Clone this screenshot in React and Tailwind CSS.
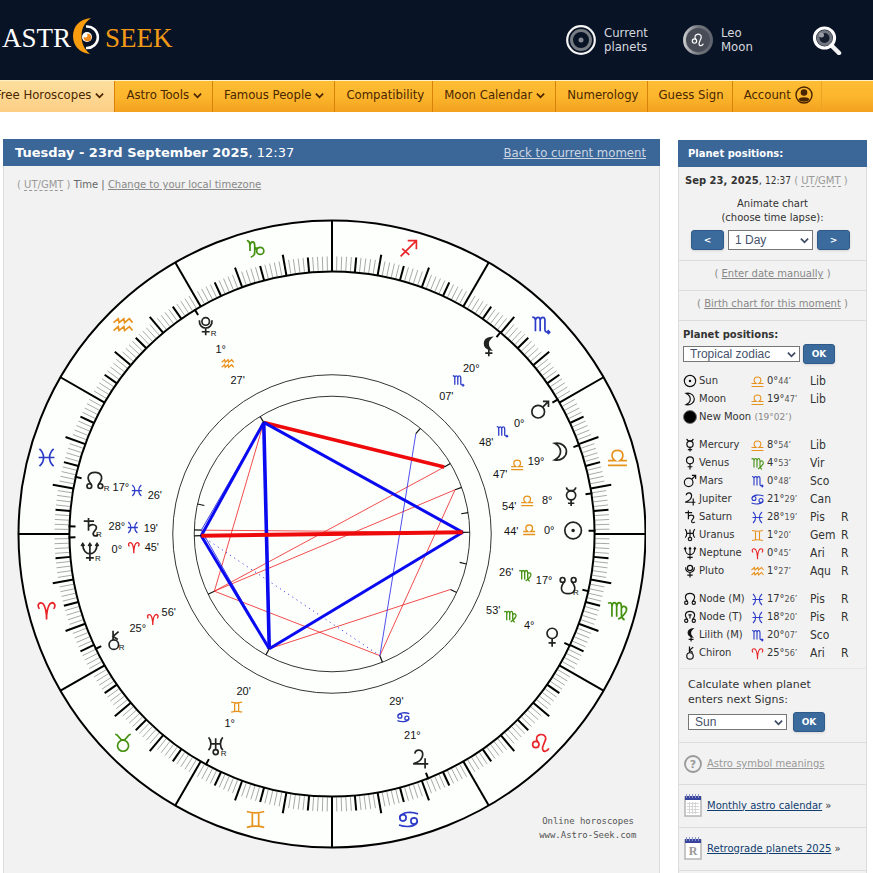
import React from 'react';
import clsx from 'clsx';

const UI = "font-['DejaVu_Sans_Condensed','Noto_Sans',sans-serif]";

// Stroke drawings of the symbols, all in a 24x24 box
const GLYPHS = {
  sun: <><circle cx="12" cy="12" r="10.5" /><circle cx="12" cy="12" r="1.2" fill="currentColor" /></>,
  moon: <path d="M5 1.5C14 0 20 6 20 12S14 24 5 22.5C10 20 12.500 16 12.500 12S10 4 5 1.500Z" />,
  mercury: <><circle cx="12" cy="10.5" r="5.8" /><path d="M6 0.500C7 6 17 6 18 0.500M12 16.500V24M8 20.500H16" /></>,
  venus: <><circle cx="12" cy="7" r="6.5" /><path d="M12 13.500V24M7.500 19H16.500" /></>,
  mars: <><circle cx="9.5" cy="14.5" r="8" /><path d="M15.300 8.700L22.500 1.500M15.500 1.500H22.500V8.500" /></>,
  jupiter: <path d="M5 5C6 -1 15 -1 15 6C15 12 9 16 3 18H22M18 11V24" />,
  saturn: <path d="M3 4H16M9 0V16M9 11C12 7 19 8 19 12C19 16 14 17 15 21C16 23.500 19 23 21 21" />,
  uranus: <><path d="M12 2V16M5 9H19M3 1C7 5 7 13 3 17M21 1C17 5 17 13 21 17" /><circle cx="12" cy="19.500" r="3.200" /></>,
  neptune: <path d="M3 3C3 19 21 19 21 3M12 2V24M7 20H17M1 5L3 2L5 5M19 5L21 2L23 5M10 5L12 2L14 5" />,
  pluto: <><circle cx="12" cy="6.500" r="4.800" /><path d="M4 5C3 18 21 18 20 5M12 15V24M7 19.500H17" /></>,
  node: <><circle cx="5" cy="19" r="3" /><circle cx="19" cy="19" r="3" /><path d="M7.500 17C0 8 4 1.500 12 1.500S24 8 16.500 17" /></>,
  nodeTrue: <><circle cx="5" cy="19" r="3" /><circle cx="19" cy="19" r="3" /><path d="M7.500 17C0 8 4 1.500 12 1.500S24 8 16.500 17M9 8H15M12 8V15" /></>,
  southNode: <><circle cx="5" cy="5" r="3" /><circle cx="19" cy="5" r="3" /><path d="M7.500 7C0 16 4 22.500 12 22.500S24 16 16.500 7" /></>,
  lilith: <><path d="M17 0.500C6 2 6 13 16 15.500C12 11 12 5 17 0.500Z" fill="currentColor" /><path d="M14 15V24M9.500 20H18.500" /></>,
  chiron: <><circle cx="12" cy="17.500" r="6" /><path d="M11 11.500V0M18 1L11 7L17 11" /></>,
  aries: <path d="M3 10C-1 4 4 0 8 4C11 8 12 16 12 23.500C12 16 13 8 16 4C20 0 25 4 21 10" />,
  taurus: <><circle cx="12" cy="15.500" r="7" /><path d="M2 1C7 1 7 8.500 12 8.500S17 1 22 1" /></>,
  gemini: <path d="M1 2C8 4 16 4 23 2M1 22C8 20 16 20 23 22M8 3.500V20.500M16 3.500V20.500" />,
  cancer: <><circle cx="5" cy="10" r="4" /><circle cx="19" cy="14" r="4" /><path d="M1 9C4 2 16 2 24 5M23 15C20 22 8 22 0 19" /></>,
  leo: <><circle cx="5.500" cy="14" r="4" /><path d="M8 11C1 0 19 -2 18 7C17 12 13 16 14 20C15 24 20 23 22 19" /></>,
  virgo: <path d="M0 3C4 1 5 3 5 6V20M5 7C6 0 11 1 11 7V20M11 7C12 0 17 1 17 7V17C17 21 19 23 21 24M17 9C20 4 25 8 23 13C21 17 18 20 13 23" />,
  libra: <path d="M0 22H24M0 16H9C3 12 4 3 12 3S21 12 15 16H24" />,
  scorpio: <path d="M1 2C4 2 5 3 5 6V20M5 6C6 1 11 1 11 6V20M11 6C12 1 17 1 17 6V18C17 21 19 21 23 21M20.500 18.500L23 21L20.500 23.500" />,
  sagittarius: <path d="M2 22L22 2M11 2H22V13M4 12L13 20" />,
  capricorn: <><path d="M1 2C5 2 5 6 5 9V15M5 8C6 2 11 2 11 8V17C11 20 9 22 6 23M11 14C12 11 14 11 15 12" /><circle cx="18" cy="15" r="4.500" /></>,
  aquarius: <path d="M0 9L6 4L7 9L13 4L14 9L20 4L24 9M0 19L6 14L7 19L13 14L14 19L20 14L24 19" />,
  pisces: <path d="M3 1C10 7 10 17 3 23M21 1C14 7 14 17 21 23M2 12H22" />,
};

const SIGN_COLORS = {
  aries: '#e8262a',
  leo: '#e8262a',
  sagittarius: '#e8262a',
  taurus: '#44900f',
  virgo: '#44900f',
  capricorn: '#44900f',
  gemini: '#e8921e',
  libra: '#e8921e',
  aquarius: '#e8921e',
  cancer: '#2c3bc8',
  scorpio: '#2c3bc8',
  pisces: '#2c3bc8',
};

const SIGNS = [
  'aries', 'taurus', 'gemini', 'cancer', 'leo', 'virgo',
  'libra', 'scorpio', 'sagittarius', 'capricorn', 'aquarius', 'pisces',
];

// Longitude plus the label spots: glyph, degree, sign, minutes
const BODIES = [
  { id: 'pluto', lon: 301.45, at: [205, 325], deg: ['1°', 220, 348], sign: ['aquarius', 227, 363], min: ["27'", 237, 379], retro: true },
  { id: 'lilith', lon: 230.12, at: [487, 346], deg: ['20°', 471, 367], sign: ['scorpio', 458, 380], min: ["07'", 446, 395] },
  { id: 'mars', lon: 210.8, at: [540, 409], deg: ['0°', 519, 422], sign: ['scorpio', 502, 431], min: ["48'", 486, 441] },
  { id: 'moon', lon: 199.78, at: [560, 451], deg: ['19°', 536, 460], sign: ['libra', 517, 464], min: ["47'", 500, 473] },
  { id: 'mercury', lon: 188.9, at: [571, 496], deg: ['8°', 547, 499], sign: ['libra', 527, 500], min: ["54'", 509, 505] },
  { id: 'sun', lon: 180.73, at: [573, 530], deg: ['0°', 549, 530], sign: ['libra', 529, 529], min: ["44'", 511, 531] },
  { id: 'southNode', lon: 167.43, at: [568, 585], deg: ['17°', 544, 580], sign: ['virgo', 525, 575], min: ["26'", 506, 572], retro: true },
  { id: 'venus', lon: 154.88, at: [552, 637], deg: ['4°', 529, 625], sign: ['virgo', 510, 616], min: ["53'", 493, 610] },
  { id: 'jupiter', lon: 111.48, at: [420, 759], deg: ['21°', 412, 735], sign: ['cancer', 403, 717], min: ["29'", 396, 701] },
  { id: 'uranus', lon: 61.33, at: [215, 746], deg: ['1°', 229, 723], sign: ['gemini', 236, 707], min: ["20'", 243, 691], retro: true },
  { id: 'chiron', lon: 25.93, at: [113, 640], deg: ['25°', 137, 628], sign: ['aries', 152, 619], min: ["56'", 168, 612], retro: true },
  { id: 'neptune', lon: 0.75, at: [89, 551], deg: ['0°', 116, 549], sign: ['aries', 133, 547], min: ["45'", 151, 547], retro: true },
  { id: 'saturn', lon: 358.32, at: [90, 527], deg: ['28°', 116, 526], sign: ['pisces', 132, 527], min: ["19'", 150, 528], retro: true },
  { id: 'node', lon: 347.43, at: [94, 480], deg: ['17°', 120, 486], sign: ['pisces', 136, 490], min: ["26'", 154, 494], retro: true },
];

const ASPECTS = [
  ['saturn', 'sun', '#ee2020', 0.8],
  ['pluto', 'chiron', '#ee2020', 0.8],
  ['mars', 'chiron', '#ee2020', 0.8],
  ['moon', 'chiron', '#ee2020', 0.8],
  ['moon', 'jupiter', '#ee2020', 0.8],
  ['chiron', 'jupiter', '#ee2020', 0.8],
  ['uranus', 'venus', '#ee2020', 0.8],
  ['saturn', 'pluto', '#1010e0', 0.8],
  ['saturn', 'uranus', '#1010e0', 0.8],
  ['lilith', 'jupiter', '#2222e8', 0.8],
  ['neptune', 'jupiter', '#2222e8', 1, '1 4'],
  ['pluto', 'mars', '#ee0a0a', 3.6],
  ['pluto', 'neptune', '#0a0af0', 3],
  ['neptune', 'uranus', '#0a0af0', 3],
  ['pluto', 'sun', '#0a0af0', 3],
  ['uranus', 'sun', '#0a0af0', 3],
  ['pluto', 'uranus', '#0a0af0', 3.6],
  ['neptune', 'sun', '#ee0a0a', 4],
];

const CX = 331.5;
const CY = 533.5;

const point = (lon, r) => {
  const a = (lon * Math.PI) / 180;
  return [CX - r * Math.cos(a), CY + r * Math.sin(a)];
};

function Spoke({ lon, from, to, ...rest }) {
  const [x1, y1] = point(lon, from);
  const [x2, y2] = point(lon, to);
  return <line x1={x1} y1={y1} x2={x2} y2={y2} {...rest} />;
}

/** Symbol placed by its centre inside the chart */
function ChartGlyph({ id, x, y, size, color = '#222', weight = 1.7 }) {
  const k = size / 24;
  return (
    <g
      transform={`translate(${x - size / 2} ${y - size / 2}) scale(${k})`}
      color={color}
      stroke={color}
      strokeWidth={weight / k}
      fill="none"
    >
      {GLYPHS[id]}
    </g>
  );
}

/** Standalone symbol for running text and tables */
function Glyph({ id, color = '#111', className }) {
  return (
    <svg viewBox="-1 -1 26 26" className={className} stroke={color} color={color} strokeWidth="2.2" fill="none" aria-hidden="true">
      {GLYPHS[id]}
    </svg>
  );
}

function Chart() {
  const degrees = Array.from({ length: 360 }, (_, i) => i);
  const byId = Object.fromEntries(BODIES.map((b) => [b.id, b]));

  return (
    <svg viewBox="16 218 630 631" className="block w-full max-w-[630px] h-auto" role="img" aria-label="Planet chart">
      <circle cx={CX} cy={CY} r="314" fill="#fdfffd" stroke="#000" strokeWidth="2" />

      {/* degree scale */}
      {degrees.map((d) => {
        if (d % 30 === 0) return <Spoke key={d} lon={d} from={263} to={314} stroke="#000" strokeWidth="2" />;
        if (d % 10 === 0) return <Spoke key={d} lon={d} from={263} to={284} stroke="#000" strokeWidth="2" />;
        if (d % 5 === 0) return <Spoke key={d} lon={d} from={263} to={278} stroke="#000" strokeWidth="2" />;
        return <Spoke key={d} lon={d} from={264} to={278} stroke="#a8a8a8" strokeWidth="1" />;
      })}
      <circle cx={CX} cy={CY} r="263" fill="none" stroke="#000" strokeWidth="2" />
      <circle cx={CX} cy={CY} r="159.500" fill="none" stroke="#333" strokeWidth="1" />
      <circle cx={CX} cy={CY} r="138" fill="none" stroke="#333" strokeWidth="1" />

      {SIGNS.map((id, i) => {
        const [x, y] = point(i * 30 + 15, 296);
        return <ChartGlyph key={id} id={id} x={x} y={y} size={19} color={SIGN_COLORS[id]} />;
      })}

      {/* aspects */}
      {ASPECTS.map(([a, b, color, weight, dash]) => {
        const [x1, y1] = point(byId[a].lon, 131);
        const [x2, y2] = point(byId[b].lon, 131);
        return (
          <line key={a + b} x1={x1} y1={y1} x2={x2} y2={y2} stroke={color} strokeWidth={weight} strokeDasharray={dash} />
        );
      })}

      {BODIES.map((b) => (
        <g key={b.id}>
          <Spoke lon={b.lon} from={257} to={264} stroke="#000" strokeWidth="2" />
          <Spoke lon={b.lon} from={131} to={138} stroke="#111" strokeWidth="1.200" />
          <ChartGlyph id={b.id} x={b.at[0]} y={b.at[1]} size={19} />
          <ChartGlyph id={b.sign[0]} x={b.sign[1]} y={b.sign[2]} size={12} weight={1.3} color={SIGN_COLORS[b.sign[0]]} />
          <g className="font-['Liberation_Sans',sans-serif] text-[11px]" fill="#111" textAnchor="middle">
            <text x={b.deg[1]} y={b.deg[2] + 4}>{b.deg[0]}</text>
            <text x={b.min[1]} y={b.min[2] + 4}>{b.min[0]}</text>
          </g>
          {b.retro && (
            <text
              className="font-['Liberation_Sans',sans-serif] text-[8px]"
              x={b.at[0] + (b.id === 'node' ? 9 : 5)}
              y={b.at[1] + 10}
              fill="#111"
            >
              R
            </text>
          )}
        </g>
      ))}

      <g className="font-['DejaVu_Sans_Mono',monospace] text-[9px]" fill="#555">
        <text x="542" y="824">Online horoscopes</text>
        <text x="539" y="838">www.Astro-Seek.com</text>
      </g>
    </svg>
  );
}

function Chevron({ className }) {
  return (
    <svg viewBox="0 0 10 7" className={className} fill="none" stroke="currentColor" strokeWidth="2" aria-hidden="true">
      <path d="M1 1.500L5 5.500L9 1.500" />
    </svg>
  );
}

function Header() {
  return (
    <header className="flex items-center h-20 bg-[#091326] text-[#d6d9de]">
      <a href="#" className="flex items-center pl-[2px] pb-1 font-['Liberation_Serif',serif] text-[27px] leading-9" aria-label="Astro-Seek">
        <span className="text-white">ASTR</span>
        <svg viewBox="71 18 34 36" className="w-[34px] h-9 mb-1" aria-hidden="true">
          <path d="M86 26.500A10.800 10.800 0 1 1 86 48" fill="none" stroke="#fff" strokeWidth="2.600" />
          <path d="M91 18C79 19 73 27 73 36S79 53 90 54C84 49 81.500 43 81.500 36S84 23 91 18Z" fill="#f99d0e" />
          <circle cx="87" cy="37" r="5" fill="#fff" />
          <circle cx="87.500" cy="37.500" r="3.800" fill="#f28c1a" />
          <circle cx="85.500" cy="35.500" r="2" fill="#fff" />
        </svg>
        <span className="text-[#f19a15]">SEEK</span>
      </a>

      <div className="flex items-center ml-auto pr-[31px] text-[13px] leading-[14px]">
        <a href="#" className="flex items-center gap-2 w-[117px]">
          <svg viewBox="0 0 30 30" className="w-[30px] h-[30px]" fill="none" aria-hidden="true">
            <circle cx="15" cy="15" r="13.800" stroke="#f4f4f4" strokeWidth="2.200" />
            <circle cx="15" cy="15" r="9.500" stroke="#777b82" strokeWidth="3" />
            <circle cx="15" cy="15" r="2.500" fill="#85888e" />
          </svg>
          <span>Current<br />planets</span>
        </a>
        <a href="#" className="flex items-center gap-2 w-[129px]">
          <svg viewBox="0 0 30 30" className="w-[30px] h-[30px]" aria-hidden="true">
            <defs>
              <linearGradient id="rim">
                <stop offset="0" stopColor="#c4c6c9" />
                <stop offset="0.500" stopColor="#73777e" />
                <stop offset="1" stopColor="#5f646c" />
              </linearGradient>
            </defs>
            <circle cx="15" cy="15" r="13.500" fill="#474c56" stroke="url(#rim)" strokeWidth="3" />
            <ChartGlyph id="leo" x={15} y={15} size={13} color="#fff" weight={1.2} />
          </svg>
          <span>Leo<br />Moon</span>
        </a>
        <button type="button" aria-label="Search" className="block">
          <svg viewBox="0 0 30 30" className="w-[30px] h-[30px]" fill="none" aria-hidden="true">
            <path d="M19.500 20.500L27 28" stroke="#f2f2f2" strokeWidth="4.500" strokeLinecap="round" />
            <circle cx="12.500" cy="13" r="10" stroke="#fff" strokeWidth="3.200" />
            <circle cx="12.500" cy="13" r="6.500" fill="#161f30" stroke="#70757d" strokeWidth="3" />
            <circle cx="9.500" cy="10" r="2.500" fill="#9a9da3" />
          </svg>
        </button>
      </div>
    </header>
  );
}

const NAV = [
  { label: 'Free Horoscopes', menu: true, active: true },
  { label: 'Astro Tools', menu: true },
  { label: 'Famous People', menu: true },
  { label: 'Compatibility' },
  { label: 'Moon Calendar', menu: true },
  { label: 'Numerology' },
  { label: 'Guess Sign' },
  { label: 'Account', user: true },
];

function Nav() {
  return (
    <nav className="h-8 overflow-hidden border-t border-[#ffeec6] bg-gradient-to-b from-[#fdbd35] via-[#fcb62c] to-[#f2a11f] text-[13px] text-[#4a2600]">
      <ul className="flex h-full -ml-4">
        {NAV.map(({ label, menu, active, user }) => (
          <li key={label} className={clsx('border-r', user ? 'border-[#eda226]' : 'border-[#d8820c]', active && 'bg-gradient-to-b from-[#fcdf9d] to-[#fdcf85]')}>
            <a href="#" className={clsx('flex items-center gap-1 h-7 pl-[11px] whitespace-nowrap', menu ? 'pr-[10px]' : 'pr-2')}>
              {label}
              {menu && <Chevron className="w-[9px] h-[7px]" />}
              {user && (
                <svg viewBox="0 0 18 18" className="w-[18px] h-[18px]" aria-hidden="true">
                  <circle cx="9" cy="9" r="8" fill="none" stroke="currentColor" strokeWidth="1.400" />
                  <circle cx="9" cy="6.500" r="3.300" fill="currentColor" />
                  <path d="M3.500 13.500C4 10.500 14 10.500 14.500 13.500C12 16.500 6 16.500 3.500 13.500Z" fill="currentColor" />
                </svg>
              )}
            </a>
          </li>
        ))}
      </ul>
    </nav>
  );
}

function Select({ label, options, className }) {
  return (
    <span className={clsx('relative block', className)}>
      <select
        aria-label={label}
        className="block w-full h-full pl-[6px] appearance-none bg-white border border-[#767676] text-[#46526b] font-['Liberation_Sans',sans-serif] text-[12px] leading-[14px]"
      >
        {options.map((o) => <option key={o}>{o}</option>)}
      </select>
      <Chevron className="absolute right-1 top-1/2 -mt-[3px] w-[9px] h-[7px] text-[#3f4c63] pointer-events-none" />
    </span>
  );
}

function Button({ children, className, ...rest }) {
  return (
    <button
      type="button"
      className={clsx('rounded-[3px] border border-[#2f5a88] bg-[#3b6a9c] text-white text-[9px] leading-[18px] font-bold shadow-sm', className)}
      {...rest}
    >
      {children}
    </button>
  );
}

const Utc = () => (
  <span className="text-[#999]">
    ( <abbr title="Universal Time" className="no-underline border-b border-dashed border-[#999]">UT/GMT</abbr> )
  </span>
);

const POSITIONS = [
  [
    ['sun', 'Sun', 'libra', '0°', '44', 'Lib'],
    ['moon', 'Moon', 'libra', '19°', '47', 'Lib'],
  ],
  [
    ['mercury', 'Mercury', 'libra', '8°', '54', 'Lib'],
    ['venus', 'Venus', 'virgo', '4°', '53', 'Vir'],
    ['mars', 'Mars', 'scorpio', '0°', '48', 'Sco'],
    ['jupiter', 'Jupiter', 'cancer', '21°', '29', 'Can'],
    ['saturn', 'Saturn', 'pisces', '28°', '19', 'Pis', 'R'],
    ['uranus', 'Uranus', 'gemini', '1°', '20', 'Gem', 'R'],
    ['neptune', 'Neptune', 'aries', '0°', '45', 'Ari', 'R'],
    ['pluto', 'Pluto', 'aquarius', '1°', '27', 'Aqu', 'R'],
  ],
  [
    ['node', 'Node (M)', 'pisces', '17°', '26', 'Pis', 'R'],
    ['nodeTrue', 'Node (T)', 'pisces', '18°', '20', 'Pis', 'R'],
    ['lilith', 'Lilith (M)', 'scorpio', '20°', '07', 'Sco'],
    ['chiron', 'Chiron', 'aries', '25°', '56', 'Ari', 'R'],
  ],
];

function PositionsTable() {
  return (
    <table className="w-full table-fixed border-collapse text-[10px] leading-[18px] whitespace-nowrap">
      <colgroup>
        <col className="w-4" />
        <col className="w-[52px]" />
        <col className="w-4" />
        <col className="w-[43px]" />
        <col className="w-[31px]" />
        <col />
      </colgroup>
      {POSITIONS.map((group, g) => (
        <tbody key={g}>
          {g > 0 && <tr className="h-[10px]"><td colSpan={6} /></tr>}
          {group.map(([id, name, sign, deg, min, abbr, retro]) => (
            <tr key={id} className="h-[18px]">
              <td className="p-0"><Glyph id={id} className="w-[14px] h-[14px]" /></td>
              <td className="p-0">{name}</td>
              <td className="p-0"><Glyph id={sign} color={SIGN_COLORS[sign]} className="w-[13px] h-[13px]" /></td>
              <td className={clsx('p-0 text-[11px] leading-[18px]', UI)}>
                {deg}<span className="text-[9px] text-[#555]">{min}’</span>
              </td>
              <td className={clsx('p-0 text-[12px] leading-[18px]', UI)}>{abbr}</td>
              <td className={clsx('p-0 text-[12px] leading-[18px]', UI)}>{retro}</td>
            </tr>
          ))}
          {g === 0 && (
            <tr className="h-[18px]">
              <td className="p-0">
                <svg viewBox="0 0 14 14" className="w-[14px] h-[14px]" aria-hidden="true">
                  <circle cx="7" cy="7" r="6.500" fill="#000" stroke="#777" strokeWidth="1" />
                </svg>
              </td>
              <td className="p-0" colSpan={5}>
                New Moon <span className="text-[9px] text-[#888]">(19°02’)</span>
              </td>
            </tr>
          )}
        </tbody>
      ))}
    </table>
  );
}

function CalendarIcon({ retro }) {
  return (
    <svg viewBox="0 0 18 23" className="w-[18px] h-[23px]" aria-hidden="true">
      <rect x="1" y="3" width="16" height="19" fill="#fff" stroke="#b5b5b5" strokeWidth="1.500" />
      <rect x="1" y="2" width="16" height="4" fill="#39459c" />
      <path d="M2.500 0V4M5.500 0V4M8.500 0V4M11.500 0V4M14.500 0V4" stroke="#8b93c9" />
      {retro ? (
        <text x="9" y="18" textAnchor="middle" fill="#999" className="font-['Liberation_Serif',serif] text-[12px] font-bold">R</text>
      ) : (
        <path d="M3 9.500H15M3 12.500H15M3 15.500H15M3 18.500H15M5.500 8V20M8.500 8V20M11.500 8V20" stroke="#d5d5d5" />
      )}
    </svg>
  );
}

function Sidebar() {
  return (
    <aside className="flex flex-col w-[189px] shrink-0 mt-px">
      <h2 className="h-[27px] pl-[10px] bg-[#3b6698] text-white text-[10px] leading-[27px] font-bold">Planet positions:</h2>
      <div className="grow border-x border-[#dcdcdc] bg-[#f2f2f2] text-[10px] text-[#333]">
        <section className="h-[94px] pt-[7px] border-b border-[#dcdcdc]">
          <p className="pl-[6px] leading-[14px] whitespace-nowrap">
            <b>Sep 23, 2025</b>, <span className={UI}>12:37</span> <Utc />
          </p>
          <p className="pt-[9px] text-center leading-[14px]">Animate chart<br />(choose time lapse):</p>
          <div className="flex justify-center gap-1 pt-[5px] pr-5 -mr-4">
            <Button className="w-[33px] h-5" aria-label="Previous">&lt;</Button>
            <Select label="Time lapse" options={['1 Day', '1 Month', '1 Year']} className="w-[85px] h-5" />
            <Button className="w-[33px] h-5" aria-label="Next">&gt;</Button>
          </div>
        </section>
        <p className="h-[30px] border-b border-[#dcdcdc] text-center leading-[26px] text-[#888]">
          ( <a href="#" className="underline">Enter date manually</a> )
        </p>
        <p className="h-[30px] border-b border-[#dcdcdc] text-center leading-[26px] text-[#888]">
          ( <a href="#" className="underline">Birth chart for this moment</a> )
        </p>

        <section className="h-[348px] pl-1 pt-[6px] border-b border-[#e8e8e8]">
          <h3 className="font-bold leading-4">Planet positions:</h3>
          <div className="flex items-center gap-[3px] pt-px pb-2">
            <Select label="Zodiac" options={['Tropical zodiac', 'Sidereal zodiac']} className="w-[117px] h-4" />
            <Button className="w-8 h-5">OK</Button>
          </div>
          <PositionsTable />
        </section>

        <section className="h-[74px] pl-[9px] pt-2 border-b border-[#dcdcdc]">
          <p className="text-[11px] leading-[15px]">Calculate when planet<br />enters next Signs:</p>
          <div className="flex items-center gap-[6px] pt-[5px]">
            <Select label="Planet" options={['Sun', 'Moon', 'Mercury', 'Venus', 'Mars']} className="w-[99px] h-4" />
            <Button className="w-8 h-5">OK</Button>
          </div>
        </section>

        <p className="flex items-center gap-[5px] h-[42px] pl-[5px] border-b border-[#dcdcdc] text-[#999]">
          <svg viewBox="0 0 18 18" className="w-[18px] h-[18px]" aria-hidden="true">
            <circle cx="9" cy="9" r="8" fill="none" stroke="currentColor" strokeWidth="1.800" />
            <text x="9" y="13" textAnchor="middle" fill="currentColor" className="text-[11px] font-bold">?</text>
          </svg>
          <a href="#" className="underline">Astro symbol meanings</a>
        </p>
        <p className="flex items-center gap-[5px] h-[43px] pl-[5px] pb-[2px] border-b border-[#dcdcdc] whitespace-nowrap">
          <CalendarIcon />
          <span><a href="#" className="underline text-[#0f3d70]">Monthly astro calendar</a> »</span>
        </p>
        <p className="flex items-center gap-[5px] h-[43px] pl-[5px] pb-[2px] border-b border-[#dcdcdc] whitespace-nowrap">
          <CalendarIcon retro />
          <span><a href="#" className="underline text-[#0f3d70]">Retrograde planets 2025</a> »</span>
        </p>
      </div>
    </aside>
  );
}

export default function App() {
  return (
    <div className="flex flex-col min-h-screen bg-white font-['DejaVu_Sans',sans-serif]">
      <div className={UI}>
        <Header />
        <Nav />
      </div>

      <div className="flex grow gap-[18px] pt-[27px] pl-[3px] pr-[6px]">
        <main className="flex flex-col grow min-w-0">
          <div className="flex items-center justify-between h-[27px] pl-3 pr-[14px] bg-[#3b6698] text-white text-[13px]">
            <h1><b>Tuesday - 23rd September 2025</b>, 12:37</h1>
            <a href="#" className={clsx('underline text-[#ccd6e2]', UI)}>Back to current moment</a>
          </div>
          <div className="grow px-[13px] border-x border-[#dcdcdc] bg-[#f2f2f2]">
            <p className="pt-[11px] pb-[27px] text-[10px] leading-[15px] text-[#666]">
              <Utc /> Time | <a href="#" className="underline text-[#888]">Change to your local timezone</a>
            </p>
            <Chart />
          </div>
        </main>
        <Sidebar />
      </div>
    </div>
  );
}
